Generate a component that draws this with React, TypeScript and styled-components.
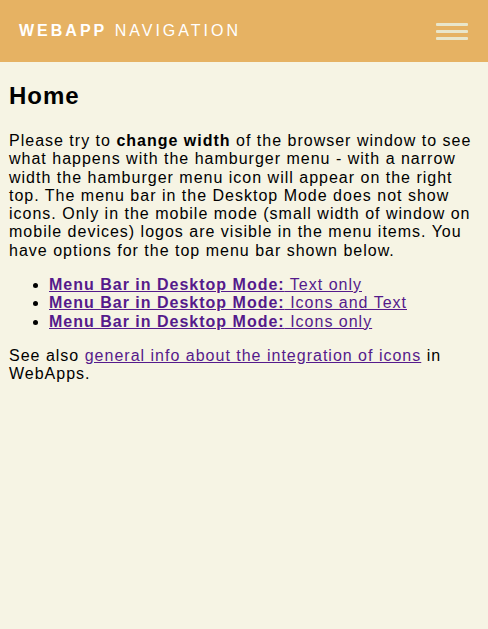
import React from "react";
import styled, { createGlobalStyle } from "styled-components";

const Global = createGlobalStyle`
  html, body { margin: 0; padding: 0; background: #f6f4e4; }
  body { font-family: "Liberation Sans", Arial, sans-serif; color: #000; }
`;

const Header = styled.header`
  height: 62px;
  background: #e6b263;
  display: flex;
  align-items: center;
  justify-content: space-between;
  padding: 0 20px 0 19px;
`;

const Brand = styled.div`
  color: #fff;
  font-size: 16px;
  letter-spacing: 3px;
  line-height: 1;
  b { font-weight: bold; }
`;

const Burger = styled.div`
  display: flex;
  flex-direction: column;
  gap: 4px;
  width: 32px;
  span {
    display: block;
    height: 3px;
    background: #e9e6cb;
    border-radius: 1px;
  }
`;

const Main = styled.main`
  padding: 0 9px;
`;

const Title = styled.h1`
  font-size: 24px;
  font-weight: bold;
  margin: 20px 0 0;
  line-height: 28px;
  letter-spacing: 1px;
`;

const Para = styled.p<{ $top?: number }>`
  font-size: 16px;
  line-height: 18.3px;
  letter-spacing: 1px;
  margin: ${(p) => p.$top ?? 16}px 0 0;
`;

const List = styled.ul`
  margin: 16px 0 0;
  padding-left: 40px;
  font-size: 16px;
  line-height: 18.3px;
  letter-spacing: 1px;
`;

const Link = styled.a`
  color: #551a8b;
  text-decoration: underline;
  b { font-weight: bold; }
`;

export default function App() {
  return (
    <>
      <Global />
      <Header>
        <Brand>
          <b>WEBAPP</b> NAVIGATION
        </Brand>
        <Burger>
          <span />
          <span />
          <span />
        </Burger>
      </Header>
      <Main>
        <Title>Home</Title>
        <Para $top={22}>
          Please try to <b>change width</b> of the browser window to see what happens with the
          hamburger menu - with a narrow width the hamburger menu icon will appear on the right
          top. The menu bar in the Desktop Mode does not show icons. Only in the mobile mode (small
          width of window on mobile devices) logos are visible in the menu items. You have options
          for the top menu bar shown below.
        </Para>
        <List>
          <li>
            <Link href="#"><b>Menu Bar in Desktop Mode:</b> Text only</Link>
          </li>
          <li>
            <Link href="#"><b>Menu Bar in Desktop Mode:</b> Icons and Text</Link>
          </li>
          <li>
            <Link href="#"><b>Menu Bar in Desktop Mode:</b> Icons only</Link>
          </li>
        </List>
        <Para>
          See also <Link href="#">general info about the integration of icons</Link> in WebApps.
        </Para>
      </Main>
    </>
  );
}
